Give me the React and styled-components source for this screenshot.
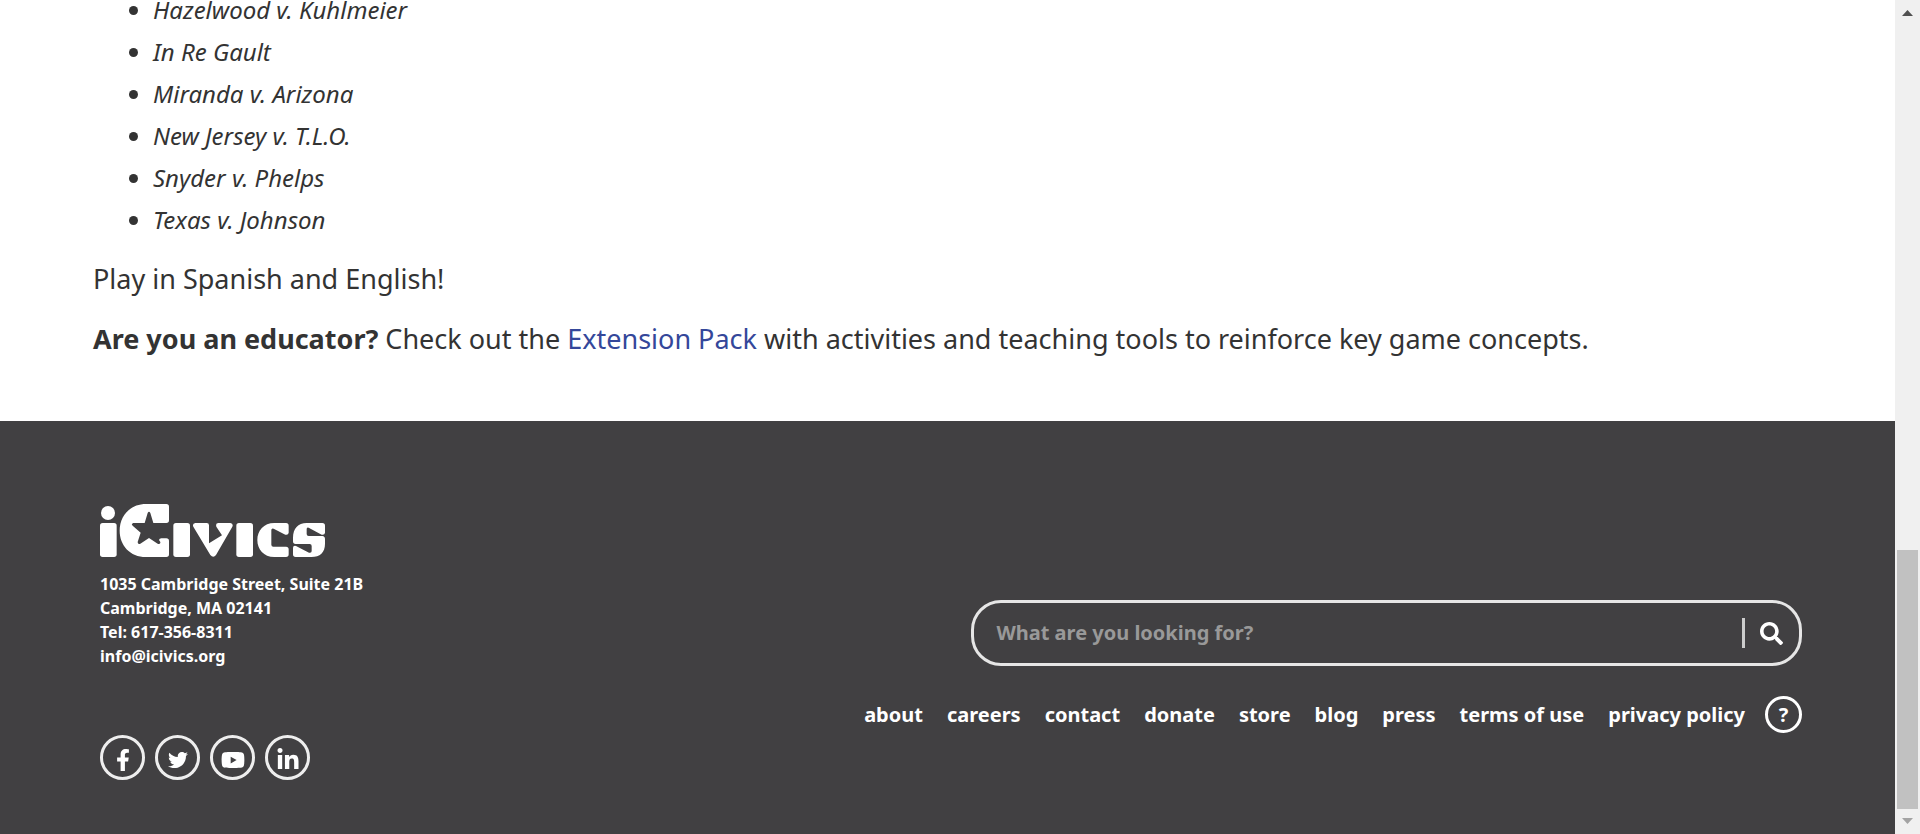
import React from "react";
import styled, { createGlobalStyle } from "styled-components";
import { FaFacebookF, FaTwitter, FaYoutube, FaLinkedinIn, FaSearch } from "react-icons/fa";

const Global = createGlobalStyle`
  * { box-sizing: border-box; }
  body { margin: 0; background: #fff; color: #333; font-family: "Noto Sans", sans-serif; overflow: hidden; }
`;

const Window = styled.div`
  display: flex;
  height: 100vh;
`;

const Page = styled.div`
  flex: 1;
  min-width: 0;
  display: flex;
  flex-direction: column;
  justify-content: flex-end;
  overflow: hidden;
`;

const Article = styled.main`
  flex: none;
  padding: 0 93px 46px;
`;

const CaseList = styled.ul`
  margin: 0 0 14px;
  padding-left: 60px;
  font-size: 24px;
  line-height: 42px;
  font-style: italic;
`;

const Paragraph = styled.p`
  margin: 0 0 12px;
  font-size: 27px;
  line-height: 48px;
`;

const TextLink = styled.a`
  color: #34479a;
  text-decoration: none;
`;

const Footer = styled.footer`
  flex: none;
  display: flex;
  padding: 83px 93px 54px 100px;
  background: #414042;
  color: #fff;
  font-weight: 700;
`;

const Contact = styled.div`
  flex: none;
  width: 20%;
  display: flex;
  flex-direction: column;
  white-space: nowrap;
`;

const LogoLink = styled.a`
  display: block;
  height: 53px;
  color: #fff;
`;

const Address = styled.address`
  margin: 15px 0 67px;
  font-size: 16px;
  line-height: 24px;
  font-style: normal;
`;

const PlainLink = styled.a`
  color: inherit;
  text-decoration: none;
`;

const SocialRow = styled.div`
  display: flex;
  gap: 10px;
`;

const SocialLink = styled.a`
  display: flex;
  align-items: center;
  justify-content: center;
  width: 45px;
  height: 45px;
  padding-top: 4px;
  border: 3px solid #eee;
  border-radius: 50%;
  color: #fff;
  font-size: ${(p) => p.$size}px;
`;

const Tools = styled.div`
  flex: 1;
  display: flex;
  flex-direction: column;
  align-items: flex-end;
  padding-top: 96px;
`;

const SearchForm = styled.form`
  display: flex;
  align-items: center;
  width: 61%;
  height: 66px;
  padding: 0 16px 0 22px;
  border: 3px solid #e6e6e6;
  border-radius: 30px;
`;

const SearchInput = styled.input`
  flex: 1;
  min-width: 0;
  padding: 0;
  border: 0;
  outline: 0;
  background: none;
  color: #fff;
  font: 700 20px/30px "Noto Sans", sans-serif;
  &::placeholder { color: #999; opacity: 1; }
`;

const SearchButton = styled.button`
  display: flex;
  align-items: center;
  height: 30px;
  padding: 0 0 0 15px;
  border: 0;
  border-left: 3px solid #ccc;
  background: none;
  color: #fff;
  font-size: 23px;
`;

const FooterNav = styled.nav`
  display: flex;
  align-items: center;
  gap: 24px;
  margin-top: 30px;
  font-size: 20px;
  line-height: 37px;
  white-space: nowrap;
`;

const HelpLink = styled.a`
  display: flex;
  align-items: center;
  justify-content: center;
  width: 37px;
  height: 37px;
  margin-left: -4px;
  border: 3px solid #fff;
  border-radius: 50%;
  color: inherit;
  text-decoration: none;
`;

const Scrollbar = styled.div`
  flex: none;
  display: flex;
  flex-direction: column;
  width: 25px;
  background: #f0f0f0;
`;

const ScrollArrow = styled.svg`
  display: block;
  width: 25px;
  height: 25px;
  flex: none;
`;

const Track = styled.div`
  flex: 1;
  display: flex;
  flex-direction: column;
  justify-content: flex-end;
  padding: 0 2px;
`;

const Thumb = styled.div`
  height: 33%;
  background: #c1c1c1;
`;

const cases = [
  "Hazelwood v. Kuhlmeier",
  "In Re Gault",
  "Miranda v. Arizona",
  "New Jersey v. T.L.O.",
  "Snyder v. Phelps",
  "Texas v. Johnson",
];

const links = ["about", "careers", "contact", "donate", "store", "blog", "press", "terms of use", "privacy policy"];

const socials = [
  { name: "Facebook", Icon: FaFacebookF, size: 22 },
  { name: "Twitter", Icon: FaTwitter, size: 20 },
  { name: "YouTube", Icon: FaYoutube, size: 24 },
  { name: "LinkedIn", Icon: FaLinkedinIn, size: 24 },
];

function Logo() {
  return (
    <svg width="226" height="53" viewBox="0 0 678 159" fill="currentColor" role="img" aria-label="iCivics">
      <circle cx="24" cy="27" r="21" />
      <rect x="0" y="57" width="50" height="102" rx="8" />
      {/* large initial with the star cut into it */}
      <path d="M138 0H199Q207 0 207 8V49Q207 57 199 57H160L151 27Q147 20 143 27L134 57H100Q92 60 98 65L122 86L113 114Q113 122 121 119L147 102L173 119Q182 122 181 114L177 108Q178 103 184 103H199Q207 103 207 111V151Q207 159 199 159H138C90 159 59 124 59 80C59 36 90 0 138 0Z" />
      <rect x="220" y="57" width="50" height="102" rx="8" />
      <path d="M286 57H320Q327 57 327 64V118L366 94L349 68Q346 57 355 57H391Q401 59 397 68L348 153Q340 163 331 153L280 68Q276 59 286 57Z" />
      <rect x="409" y="57" width="50" height="102" rx="8" />
      <path d="M523 57H558Q566 57 566 65V86Q565 94 556 92L521 74Q514 72 514 78V122Q514 128 520 128H558Q566 128 566 136V151Q566 159 558 159H523C491 159 472 136 472 108C472 80 491 57 523 57Z" />
      <path d="M620 57H667Q675 57 675 65V86Q674 94 665 92L626 71Q620 69 620 75V90Q620 96 626 96H667Q675 97 675 105V119C675 145 660 159 634 159H587Q579 159 579 151V132Q579 124 588 126L627 146Q635 148 635 141V126Q635 120 629 120H587Q579 120 579 112V101C579 74 594 57 620 57Z" />
    </svg>
  );
}

export default function App() {
  return (
    <>
      <Global />
      <Window>
        <Page>
          <Article>
            <CaseList>
              {cases.map((c) => <li key={c}>{c}</li>)}
            </CaseList>
            <Paragraph>Play in Spanish and English!</Paragraph>
            <Paragraph>
              <strong>Are you an educator?</strong> Check out the <TextLink href="#pack">Extension Pack</TextLink> with
              activities and teaching tools to reinforce key game concepts.
            </Paragraph>
          </Article>
          <Footer>
            <Contact>
              <LogoLink href="#home"><Logo /></LogoLink>
              <Address>
                1035 Cambridge Street, Suite 21B<br />
                Cambridge, MA 02141<br />
                Tel: 617-356-8311<br />
                <PlainLink href="#mail">info@icivics.org</PlainLink>
              </Address>
              <SocialRow>
                {socials.map(({ name, Icon, size }) => (
                  <SocialLink key={name} href="#social" aria-label={name} $size={size}><Icon /></SocialLink>
                ))}
              </SocialRow>
            </Contact>
            <Tools>
              <SearchForm role="search">
                <SearchInput type="text" aria-label="Search" placeholder="What are you looking for?" />
                <SearchButton type="button" aria-label="Submit search"><FaSearch /></SearchButton>
              </SearchForm>
              <FooterNav>
                {links.map((l) => <PlainLink key={l} href="#page">{l}</PlainLink>)}
                <HelpLink href="#help">?</HelpLink>
              </FooterNav>
            </Tools>
          </Footer>
        </Page>
        <Scrollbar aria-hidden="true">
          <ScrollArrow viewBox="0 0 25 25"><path d="M7 16L12.500 10L18 16Z" fill="#505050" /></ScrollArrow>
          <Track><Thumb /></Track>
          <ScrollArrow viewBox="0 0 25 25"><path d="M7 9L12.500 15L18 9Z" fill="#a3a3a3" /></ScrollArrow>
        </Scrollbar>
      </Window>
    </>
  );
}
